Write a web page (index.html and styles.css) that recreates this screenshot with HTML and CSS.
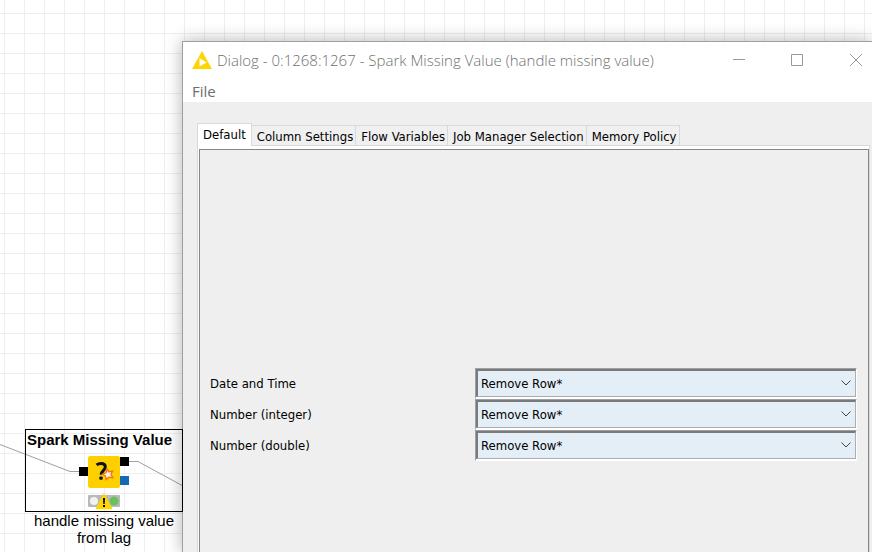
FILE: index.html
```html
<!DOCTYPE html>
<html lang="en">
<head>
<meta charset="utf-8">
<title>Spark Missing Value</title>
<link rel="stylesheet" href="styles.css">
</head>
<body>
<main class="canvas">
  <svg class="wires" width="200" height="80" viewBox="0 0 200 80" fill="none" stroke="#a0a0a0">
    <path d="M0 14.500L70 41.500H80M128 31.500H138L184 56.500"/>
  </svg>
  <section class="node">
    <div class="node-box">
      <h2 class="node-name">Spark Missing Value</h2>
      <svg class="node-icon" width="50" height="56" viewBox="0 0 50 56">
        <rect x="9" y="1" width="32" height="32" rx="2" fill="#ffd000"/>
        <rect x="0" y="12" width="9" height="9" fill="#000"/>
        <rect x="41" y="2" width="9" height="9" fill="#000"/>
        <rect x="41" y="21" width="9" height="9" fill="#146bb5"/>
        <path d="M17.500 9.900C19 8.800 20.500 8.500 22 8.500C24.900 8.500 26.300 9.900 26.300 12C26.300 15.400 22 15.800 22 19.800" fill="none" stroke="#111" stroke-width="3"/>
        <rect x="20.300" y="21.500" width="3.400" height="3.200" rx="1" fill="#111"/>
        <path d="M28 14L29.800 16.800L33.600 16.200L32 19.300L33.800 22.700L29.900 22.300L27.100 24.600L26.600 21.200L23.600 19.400L27.100 17.600Z" fill="#fff3e0" stroke="#f07818" stroke-width="1.400"/>
        <rect x="9" y="40" width="32" height="12" rx="1" fill="#b9b9b9"/>
        <circle cx="15" cy="46" r="4" fill="#f2f2f2"/>
        <circle cx="35" cy="46" r="4.500" fill="#6abf5e"/>
        <path d="M25 39.500L32.500 53.500H17.500Z" fill="#ffd600" stroke="#ffd600" stroke-width="1.500" stroke-linejoin="round"/>
        <path d="M24 43H26L25.700 49H24.300ZM24 50H26V52H24Z" fill="#000"/>
      </svg>
    </div>
    <p class="node-caption">handle missing value<br>from lag</p>
  </section>
</main>

<div class="dialog" role="dialog" aria-labelledby="dialog-title">
  <header class="titlebar">
    <svg class="logo" width="20" height="18" viewBox="0 0 20 18">
      <path d="M10 0L20 18H0Z" fill="#ffd500"/>
      <path d="M7.500 7L14.500 11.500L7.500 15.500Z" fill="#fff"/>
    </svg>
    <h1 class="title" id="dialog-title">Dialog - 0:1268:1267 - Spark Missing Value (handle missing value)</h1>
    <button class="win-btn" type="button" aria-label="Minimize"><svg width="14" height="14" viewBox="0 0 14 14"><path d="M1 6.500H13"/></svg></button>
    <button class="win-btn" type="button" aria-label="Maximize"><svg width="14" height="14" viewBox="0 0 14 14"><path d="M1.500 1.500H12.500V12.500H1.500Z"/></svg></button>
    <button class="win-btn" type="button" aria-label="Close"><svg width="14" height="14" viewBox="0 0 14 14"><path d="M1 1L13 13M13 1L1 13"/></svg></button>
  </header>
  <nav class="menubar"><button class="menu" type="button">File</button></nav>
  <div class="content">
    <div class="tabs" role="tablist">
      <button class="tab tab-active" type="button" role="tab" aria-selected="true">Default</button>
      <button class="tab" type="button" role="tab">Column Settings</button>
      <button class="tab" type="button" role="tab">Flow Variables</button>
      <button class="tab" type="button" role="tab">Job Manager Selection</button>
      <button class="tab" type="button" role="tab">Memory Policy</button>
    </div>
    <div class="pane">
      <form class="panel">
        <div class="row">
          <label for="date">Date and Time</label>
          <div class="combo"><select id="date"><option>Remove Row*</option></select><svg class="chevron" width="12" height="8" viewBox="0 0 12 8"><path d="M1.500 1.500L6 6L10.500 1.500"/></svg></div>
        </div>
        <div class="row">
          <label for="integer">Number (integer)</label>
          <div class="combo"><select id="integer"><option>Remove Row*</option></select><svg class="chevron" width="12" height="8" viewBox="0 0 12 8"><path d="M1.500 1.500L6 6L10.500 1.500"/></svg></div>
        </div>
        <div class="row">
          <label for="double">Number (double)</label>
          <div class="combo"><select id="double"><option>Remove Row*</option></select><svg class="chevron" width="12" height="8" viewBox="0 0 12 8"><path d="M1.500 1.500L6 6L10.500 1.500"/></svg></div>
        </div>
      </form>
    </div>
  </div>
</div>
</body>
</html>
```
FILE: styles.css
```css
* { box-sizing: border-box; }

body {
  margin: 0;
  min-height: 100vh;
  overflow: hidden;
  color: #000;
  font-family: "DejaVu Sans Condensed", "DejaVu Sans", sans-serif;
  font-size: 13px;
}

h1, h2, p { margin: 0; font-weight: normal; }

button, select { font: inherit; color: inherit; }

/* Workflow canvas */
.canvas {
  position: relative;
  min-height: 100vh;
  background-color: #fff;
  background-image:
    linear-gradient(to right, #eee 1px, transparent 1px),
    linear-gradient(to bottom, #eee 1px, transparent 1px);
  background-size: 20px 20px;
  background-position: 4px 13px;
}

.wires { position: absolute; left: 0; top: 430px; }

.node {
  position: absolute;
  z-index: 1;
  left: 25px;
  top: 429px;
  width: 158px;
  font-family: "Liberation Sans", Arial, sans-serif;
  font-size: 15px;
  line-height: 17px;
}

.node-box {
  height: 83px;
  border: 1px solid #000;
}

.node-name {
  padding: 1px 1px 0;
  font-size: 15px;
  font-weight: bold;
  line-height: 17px;
  white-space: nowrap;
}

.node-icon { display: block; margin: 7px 0 0 53px; }

.node-caption { text-align: center; }

/* Dialog window */
.dialog {
  position: absolute;
  left: 182px;
  top: 41px;
  right: 0;
  bottom: 0;
  display: flex;
  flex-direction: column;
  border: solid #a0a0a0;
  border-width: 1px 0 0 1px;
  background: #efefef;
  box-shadow: 0 0 16px rgba(0, 0, 0, 0.3);
}

.titlebar {
  display: flex;
  align-items: center;
  height: 36px;
  padding-left: 9px;
  background: #fff;
}

.title {
  flex: 1;
  padding-left: 5px;
  color: #707070;
  font-family: "Open Sans", sans-serif;
  font-size: 15px;
  font-weight: 300;
  white-space: nowrap;
}

.win-btn {
  display: flex;
  width: 58px;
  padding: 0;
  border: 0;
  background: none;
  justify-content: center;
}

.win-btn:last-child { width: 46px; padding-left: 14px; }

.win-btn svg { fill: none; stroke: #999; }

.menubar { height: 24px; background: #fff; }

.menu {
  padding: 0 9px;
  border: 0;
  background: none;
  color: #6d6d6d;
  font-family: "Open Sans", sans-serif;
  font-size: 15px;
  line-height: 26px;
}

.content {
  flex: 1;
  display: flex;
  flex-direction: column;
  padding: 21px 2px 0 14px;
}

.tabs { display: flex; align-items: flex-end; }

.tab {
  height: 20px;
  padding: 2px 2px 0 5px;
  border: solid #d9d9d9;
  border-width: 1px 1px 0 0;
  background: #f0f0f0;
  line-height: 18px;
  white-space: nowrap;
}

.tab-active {
  position: relative;
  height: 23px;
  margin-bottom: -1px;
  padding: 0 5px;
  border-width: 1px 1px 0;
  background: #fff;
}

.pane {
  flex: 1;
  display: flex;
  padding: 3px 0 0 1px;
  border: solid #d9d9d9;
  border-width: 1px 1px 0;
  background: #fff;
}

.panel {
  flex: 1;
  padding: 218px 11px 0 10px;
  border: solid #828790;
  border-width: 1px 1px 0;
  background: #efefef;
}

.row {
  display: grid;
  grid-template-columns: 265px 1fr;
  align-items: center;
}

.combo {
  position: relative;
  height: 31px;
  border: 1px solid;
  border-color: #a0a0a0 #fff #fff #a0a0a0;
  background: #fff;
}

.combo select {
  display: block;
  width: 100%;
  height: 28px;
  padding: 0 3px;
  border: 1px solid #abadb3;
  border-top: 2px solid #7a7a7a;
  border-left: 2px solid #7a7a7a;
  border-radius: 0;
  background: #e4eef7;
  appearance: none;
}

.chevron {
  position: absolute;
  right: 4px;
  top: 10px;
  fill: none;
  stroke: #444;
  pointer-events: none;
}
```
